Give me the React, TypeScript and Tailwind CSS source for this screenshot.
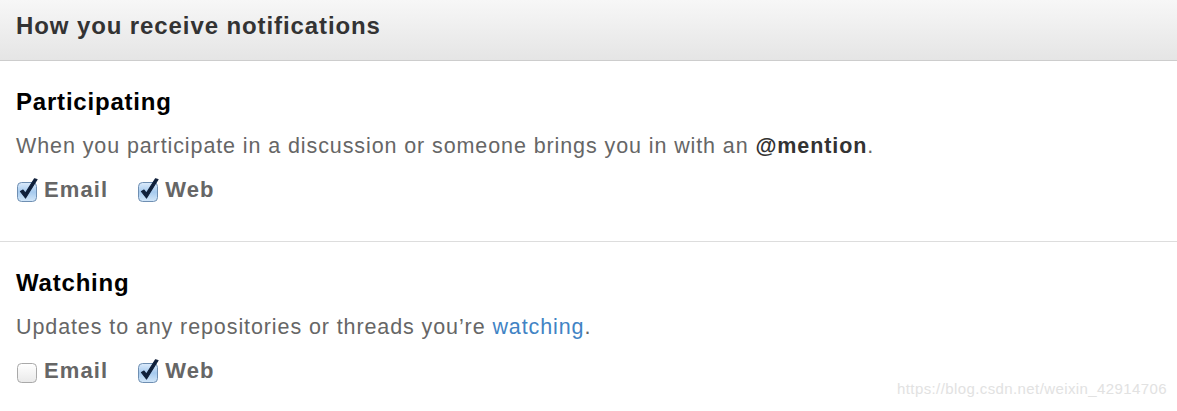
import React from "react";

function Check({ checked }: { checked: boolean }) {
  const id = checked ? "cbOn" : "cbOff";
  return (
    <svg width="24" height="24" viewBox="0 0 24 24" className="shrink-0">
      <defs>
        <linearGradient id={id} x1="0" y1="0" x2="0" y2="1">
          {checked ? (
            <>
              <stop offset="0" stopColor="#dcebfb" />
              <stop offset="0.5" stopColor="#a6caee" />
              <stop offset="1" stopColor="#d3e7f9" />
            </>
          ) : (
            <>
              <stop offset="0" stopColor="#ffffff" />
              <stop offset="1" stopColor="#e9e9e9" />
            </>
          )}
        </linearGradient>
      </defs>
      <rect
        x="1.5"
        y="4.5"
        width="19"
        height="19"
        rx="4"
        fill={`url(#${id})`}
        stroke={checked ? "#6f8fb2" : "#a9a9a9"}
        strokeWidth="1"
      />
      {checked && (
        <path
          d="M4.5 13.5 L9.5 20 L21 1.5 L18.5 0.8 L9.3 15.2 L7 12 Z"
          fill="#10203a"
          stroke="#10203a"
          strokeWidth="1.2"
          strokeLinejoin="round"
        />
      )}
    </svg>
  );
}

function Option({ label, checked }: { label: string; checked: boolean }) {
  return (
    <label className="flex items-center gap-[4px]">
      <Check checked={checked} />
      <span className="text-[22px] font-bold tracking-[1.1px] text-[#666]">{label}</span>
    </label>
  );
}

function Section({
  title,
  children,
  email,
  web,
}: {
  title: string;
  children: React.ReactNode;
  email: boolean;
  web: boolean;
}) {
  return (
    <div className="px-4 pt-[27px]">
      <h3 className="text-[24px] font-bold leading-[28px] tracking-[0.8px] text-black">{title}</h3>
      <p className="mt-[17px] text-[21.5px] leading-[26px] tracking-[0.9px] text-[#666]">{children}</p>
      <div className="mt-[14px] flex gap-[29px]">
        <Option label="Email" checked={email} />
        <Option label="Web" checked={web} />
      </div>
    </div>
  );
}

export default function App() {
  return (
    <div
      className="relative h-[411px] w-[1177px] overflow-hidden bg-white"
      style={{ fontFamily: '"Liberation Sans", Arial, sans-serif' }}
    >
      <div className="flex h-[61px] items-center border-b border-[#cdcdcd] bg-gradient-to-b from-[#f7f7f7] to-[#e5e5e5] px-4 pb-[9px]">
        <h2 className="text-[24px] font-bold tracking-[0.9px] text-[#333]">How you receive notifications</h2>
      </div>

      <div className="h-[181px] border-b border-[#ddd]">
        <Section title="Participating" email web>
          When you participate in a discussion or someone brings you in with an{" "}
          <strong className="text-[#333]">@mention</strong>.
        </Section>
      </div>

      <Section title="Watching" email={false} web>
        Updates to any repositories or threads you’re{" "}
        <a className="text-[#4183c4]">watching</a>.
      </Section>

      <div className="absolute bottom-[11px] right-[10px] text-[15px] tracking-[0.4px] text-[#e2e2e2]">
        https://blog.csdn.net/weixin_42914706
      </div>
    </div>
  );
}
